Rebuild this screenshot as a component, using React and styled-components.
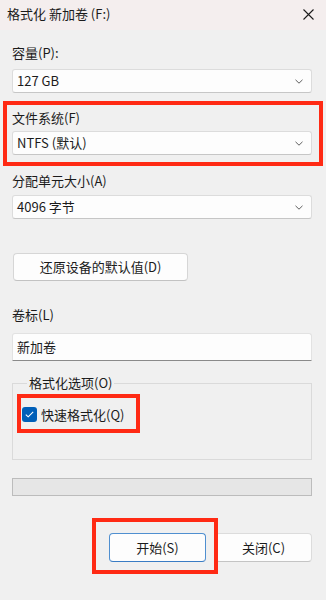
import styled, { createGlobalStyle } from 'styled-components'

const GlobalStyle = createGlobalStyle`
  html, body {
    margin: 0;
    padding: 0;
    background: #f0f0f0;
  }
  * {
    box-sizing: border-box;
  }
`

const Window = styled.div`
  position: relative;
  width: 326px;
  height: 600px;
  background: #f0f0f0;
  font-family: "Noto Sans CJK SC", "Noto Sans", sans-serif;
  font-size: 13px;
  color: #1b1b1b;
  overflow: hidden;
`
const TitleBar = styled.div`
  height: 30px;
  background: #f4eeee;
  display: flex;
  align-items: center;
  justify-content: space-between;
  padding: 0 12px 0 7px;
`
const Title = styled.div`
  font-size: 13px;
  line-height: 18px;
  margin-top: -2px;
`
const CloseGlyph = styled.svg`
  width: 11px;
  height: 11px;
  margin-top: -2px;
`
const Content = styled.div`
  display: flex;
  flex-direction: column;
  padding: 14px 14px 0 12px;
`
const Label = styled.div`
  line-height: 18px;
  height: 18px;
  margin-top: ${p => p.$top || 0}px;
`
const Select = styled.div`
  margin-top: ${p => p.$top || 0}px;
  height: 24px;
  background: #fdfdfd;
  border: 1px solid #dcdcdc;
  border-bottom-color: #c6c6c6;
  border-radius: 3px;
  display: flex;
  align-items: center;
  justify-content: space-between;
  padding: 0 8px 0 4px;
  line-height: 18px;
`
const Chevron = styled.svg`
  width: 8px;
  height: 5px;
`
const PlainButton = styled.div`
  height: 28px;
  background: #fdfdfd;
  border: 1px solid #d6d6d6;
  border-bottom-color: #c2c2c2;
  border-radius: 4px;
  display: flex;
  align-items: center;
  justify-content: center;
  line-height: 18px;
`
const RestoreButton = styled(PlainButton)`
  margin-top: 34px;
  margin-left: 1px;
  width: 175px;
`
const TextInput = styled.div`
  margin-top: 9px;
  height: 28px;
  background: #fdfdfd;
  border: 1px solid #e2e2e2;
  border-bottom: 1px solid #8a8a8a;
  border-radius: 3px 3px 0 0;
  display: flex;
  align-items: center;
  padding: 0 4px;
  line-height: 18px;
`
const GroupBox = styled.fieldset`
  margin: 13px 0 0;
  padding: 15px 9px 37px;
  border: 1px solid #dadada;
  min-width: 0;
`
const Legend = styled.legend`
  margin-left: 5px;
  padding: 0 2px;
  line-height: 18px;
`
const CheckRow = styled.label`
  display: flex;
  align-items: center;
  gap: 4px;
  height: 15px;
  line-height: 18px;
`
const CheckBox = styled.span`
  width: 15px;
  height: 15px;
  border-radius: 3px;
  background: #005fb8;
  display: flex;
  align-items: center;
  justify-content: center;
`
const Progress = styled.div`
  margin-top: 18px;
  height: 18px;
  background: #e6e6e6;
  border: 1px solid #bcbcbc;
`
const ButtonRow = styled.div`
  margin-top: 37px;
  display: flex;
  justify-content: flex-end;
  gap: 9px;
`
const DialogButton = styled(PlainButton)`
  width: 97px;
  height: 29px;
  border-color: ${p => (p.$primary ? '#4f8fd0' : '#dcdcdc')};
  border-bottom-color: ${p => (p.$primary ? '#3a7cc4' : '#c4c4c4')};
`
const Highlight = styled.div`
  position: absolute;
  left: ${p => p.$x}px;
  top: ${p => p.$y}px;
  width: ${p => p.$w}px;
  height: ${p => p.$h}px;
  border: 4px solid #ff2a14;
  pointer-events: none;
`

function ChevronIcon() {
  return (
    <Chevron viewBox="0 0 8 5">
      <polyline points="0.5,0.8 4,4.2 7.5,0.8" fill="none" stroke="#5f5f5f" strokeWidth="1" />
    </Chevron>
  )
}

export default function App() {
  return (
    <>
      <GlobalStyle />
      <Window>
        <TitleBar>
          <Title>格式化 新加卷 (F:)</Title>
          <CloseGlyph viewBox="0 0 11 11">
            <path d="M0.5 0.5 L10.5 10.5 M10.5 0.5 L0.5 10.5" stroke="#1b1b1b" strokeWidth="1.1" />
          </CloseGlyph>
        </TitleBar>
        <Content>
          <Label>容量(P):</Label>
          <Select $top={7}>
            <span>127 GB</span>
            <ChevronIcon />
          </Select>
          <Label $top={16}>文件系统(F)</Label>
          <Select $top={4}>
            <span>NTFS (默认)</span>
            <ChevronIcon />
          </Select>
          <Label $top={17}>分配单元大小(A)</Label>
          <Select $top={5}>
            <span>4096 字节</span>
            <ChevronIcon />
          </Select>
          <RestoreButton>还原设备的默认值(D)</RestoreButton>
          <Label $top={25}>卷标(L)</Label>
          <TextInput>新加卷</TextInput>
          <GroupBox>
            <Legend>格式化选项(O)</Legend>
            <CheckRow>
              <CheckBox>
                <svg width="9" height="7" viewBox="0 0 9 7">
                  <polyline points="0.8,3.6 3.2,5.8 8.2,0.8" fill="none" stroke="#ffffff" strokeWidth="1.1" />
                </svg>
              </CheckBox>
              快速格式化(Q)
            </CheckRow>
          </GroupBox>
          <Progress />
          <ButtonRow>
            <DialogButton $primary>开始(S)</DialogButton>
            <DialogButton>关闭(C)</DialogButton>
          </ButtonRow>
        </Content>
        <Highlight $x={3} $y={101} $w={320} $h={65} />
        <Highlight $x={17} $y={394} $w={123} $h={39} />
        <Highlight $x={92} $y={518} $w={126} $h={56} />
      </Window>
    </>
  )
}
